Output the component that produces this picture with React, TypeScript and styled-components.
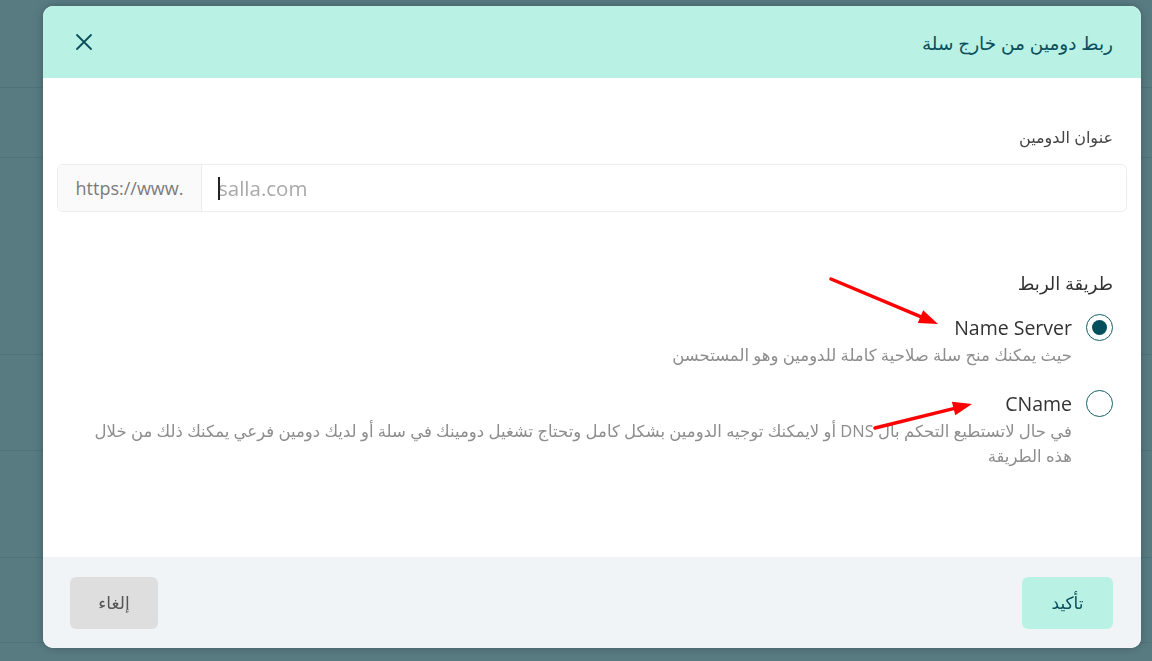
import React from 'react';
import styled, { createGlobalStyle } from 'styled-components';

const GlobalStyle = createGlobalStyle`
  html, body {
    margin: 0;
    padding: 0;
    height: 100%;
    overflow: hidden;
  }
  body {
    font-family: 'Open Sans', 'DejaVu Sans', sans-serif;
    background: #587b82;
  }
`;

const pageRows = [88, 70, 197, 96, 107, 85];

// arrow: tail -> tip, head drawn as a filled triangle
const arrow = (x1: number, y1: number, x2: number, y2: number, len = 19, half = 7) => {
  const dx = x2 - x1;
  const dy = y2 - y1;
  const d = Math.hypot(dx, dy);
  const ux = dx / d;
  const uy = dy / d;
  const bx = x2 - ux * len;
  const by = y2 - uy * len;
  const px = -uy * half;
  const py = ux * half;
  return {
    line: { x1, y1, x2: bx + ux * 2, y2: by + uy * 2 },
    head: `${x2},${y2} ${bx + px},${by + py} ${bx - px},${by - py}`,
  };
};

const arrows = [arrow(788, 273, 895, 318), arrow(832, 422, 929, 398)];

const App = () => {
  return (
    <>
      <GlobalStyle />
      <Page>
        {pageRows.map((h, i) => (
          <PageRow key={i} $height={h} />
        ))}
      </Page>
      <Backdrop>
        <Dialog dir="rtl">
          <Header>
            <Title>ربط دومين من خارج سلة</Title>
            <CloseButton aria-label="close">
              <svg width="18" height="18" viewBox="0 0 18 18">
                <path d="M2 2 L16 16 M16 2 L2 16" stroke="#0b4f5a" strokeWidth="1.8" strokeLinecap="round" />
              </svg>
            </CloseButton>
          </Header>
          <Body>
            <FieldLabel>عنوان الدومين</FieldLabel>
            <InputGroup dir="ltr">
              <Prefix>https://www.</Prefix>
              <InputBox>
                <Caret />
                <Placeholder>salla.com</Placeholder>
              </InputBox>
            </InputGroup>

            <SectionTitle>طريقة الربط</SectionTitle>
            <Option>
              <OptionHead>
                <Radio $checked />
                <OptionName>Name Server</OptionName>
              </OptionHead>
              <OptionHint>حيث يمكنك منح سلة صلاحية كاملة للدومين وهو المستحسن</OptionHint>
            </Option>
            <Option $gap={21}>
              <OptionHead>
                <Radio />
                <OptionName>CName</OptionName>
              </OptionHead>
              <OptionHint>
                في حال لاتستطيع التحكم بال DNS أو لايمكنك توجيه الدومين بشكل كامل وتحتاج تشغيل دومينك في سلة أو لديك دومين فرعي يمكنك ذلك من خلال هذه الطريقة
              </OptionHint>
            </Option>
          </Body>
          <Footer>
            <Button $variant="primary">تأكيد</Button>
            <Button>إلغاء</Button>
          </Footer>
          <Arrows viewBox="0 0 1098 642" width="1098" height="642">
            {arrows.map((a, i) => (
              <g key={i}>
                <line {...a.line} stroke="#ff0000" strokeWidth="3.5" strokeLinecap="round" />
                <polygon points={a.head} fill="#ff0000" />
              </g>
            ))}
          </Arrows>
        </Dialog>
      </Backdrop>
    </>
  );
};

export default App;

const Page = styled.div`
  display: flex;
  flex-direction: column;
  height: 100vh;
`;

const PageRow = styled.div<{ $height: number }>`
  height: ${(p) => p.$height}px;
  border-bottom: 1px solid rgba(0, 0, 0, 0.07);
  box-sizing: border-box;
`;

const Backdrop = styled.div`
  position: fixed;
  inset: 0;
  display: flex;
  align-items: flex-start;
  padding: 6px 0 0 43px;
`;

const Dialog = styled.div`
  position: relative;
  width: 1098px;
  height: 642px;
  background: #fff;
  border-radius: 10px;
  box-shadow: 0 0 8px rgba(0, 0, 0, 0.25);
  display: flex;
  flex-direction: column;
  overflow: hidden;
`;

const Header = styled.div`
  height: 72px;
  flex-shrink: 0;
  background: #baf1e5;
  display: flex;
  align-items: center;
  justify-content: space-between;
  padding: 0 28px 0 32px;
`;

const Title = styled.h2`
  margin: 0;
  font-size: 18.5px;
  font-weight: 400;
  color: #0a4f5c;
`;

const CloseButton = styled.button`
  border: none;
  background: none;
  padding: 0;
  display: flex;
  cursor: pointer;
`;

const Body = styled.div`
  flex: 1;
  display: flex;
  flex-direction: column;
  padding: 48px 14px 0;
`;

const FieldLabel = styled.label`
  font-size: 16px;
  color: #444;
  padding: 0 14px;
  margin-bottom: 16px;
  line-height: 22px;
`;

const InputGroup = styled.div`
  display: flex;
  height: 48px;
  border: 1px solid #ececec;
  border-radius: 6px;
  box-sizing: border-box;
  overflow: hidden;
`;

const Prefix = styled.div`
  width: 143px;
  flex-shrink: 0;
  background: #fafafa;
  border-right: 1px solid #ececec;
  display: flex;
  align-items: center;
  justify-content: center;
  color: #7a7a7a;
  font-size: 18px;
`;

const InputBox = styled.div`
  flex: 1;
  display: flex;
  align-items: center;
  padding-left: 16px;
  position: relative;
`;

const Caret = styled.span`
  position: absolute;
  left: 16px;
  top: 12px;
  width: 2px;
  height: 23px;
  background: #222;
`;

const Placeholder = styled.span`
  color: #a9a9a9;
  font-size: 20.5px;
`;

const SectionTitle = styled.h3`
  margin: 58px 14px 16px;
  font-size: 18px;
  font-weight: 400;
  color: #333;
  line-height: 26px;
`;

const Option = styled.div<{ $gap?: number }>`
  display: flex;
  flex-direction: column;
  padding: 0 14px;
  margin-top: ${(p) => p.$gap ?? 0}px;
`;

const OptionHead = styled.div`
  display: flex;
  align-items: center;
  gap: 14px;
  height: 30px;
`;

const Radio = styled.span<{ $checked?: boolean }>`
  width: 27px;
  height: 27px;
  border-radius: 50%;
  border: 1.5px solid #155e69;
  box-sizing: border-box;
  display: flex;
  align-items: center;
  justify-content: center;
  &::after {
    content: '';
    width: 15px;
    height: 15px;
    border-radius: 50%;
    background: ${(p) => (p.$checked ? '#044f5c' : 'transparent')};
  }
`;

const OptionName = styled.span`
  font-size: 19.5px;
  color: #333;
`;

const OptionHint = styled.p`
  margin: 0 41px 0 0;
  font-size: 16.5px;
  color: #8d8d8d;
  line-height: 25px;
`;

const Footer = styled.div`
  height: 91px;
  flex-shrink: 0;
  background: #f0f4f7;
  display: flex;
  align-items: center;
  justify-content: space-between;
  padding: 0 28px 0 27px;
`;

const Button = styled.button<{ $variant?: 'primary' }>`
  height: 52px;
  min-width: ${(p) => (p.$variant === 'primary' ? 91 : 88)}px;
  border: none;
  border-radius: 6px;
  font-family: inherit;
  font-size: 17px;
  background: ${(p) => (p.$variant === 'primary' ? '#baf1e5' : '#dedede')};
  color: ${(p) => (p.$variant === 'primary' ? '#0a4f5c' : '#555')};
  cursor: pointer;
`;

const Arrows = styled.svg`
  position: absolute;
  top: 0;
  left: 0;
  pointer-events: none;
`;
